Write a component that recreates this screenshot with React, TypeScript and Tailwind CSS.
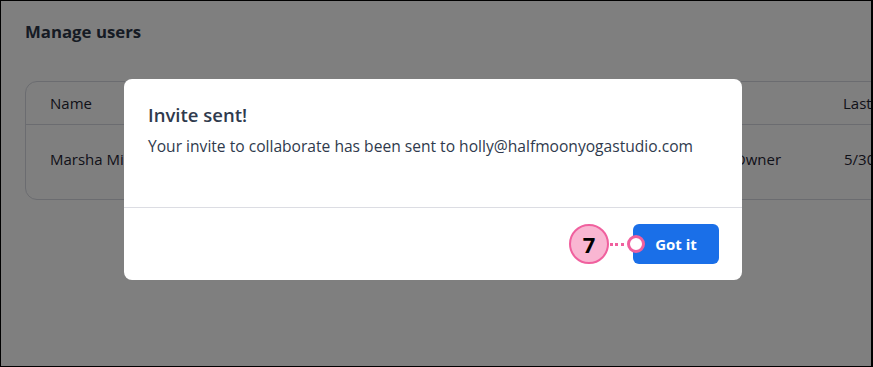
import React from "react";

export default function App() {
  return (
    <div
      className="relative w-[873px] h-[367px] overflow-hidden bg-white border-l border-t border-b border-r-2 border-black"
      style={{ fontFamily: "'Open Sans', 'Noto Sans', sans-serif" }}
    >
      {/* underlying page */}
      <div className="pl-6 pt-[19px]">
        <h1 className="text-[16.8px] font-bold text-[#2d3748] leading-6">Manage users</h1>
        <div className="mt-[37px] w-[900px] h-[119px] rounded-xl border border-[#d6d8e0] text-[#1f2433] text-[15px]">
          <div className="h-[43px] flex items-center border-b border-[#d6d8e0]">
            <div className="pl-6 w-[745px]">Name</div>
            <div className="pl-[72px]">Last</div>
          </div>
          <div className="h-[75px] flex items-center pb-[6px]">
            <div className="pl-6 w-[708px]">Marsha Miller</div>
            <div className="w-[110px]">Owner</div>
            <div>5/30</div>
          </div>
        </div>
      </div>

      {/* overlay */}
      <div className="absolute inset-0 bg-black/50" />

      {/* modal */}
      <div className="absolute left-[123px] top-[78px] w-[618px] h-[201px] bg-white rounded-lg flex flex-col">
        <div className="px-6 pt-[24px] h-[129px] border-b border-[#dcdde3]">
          <div className="text-[18.5px] font-semibold text-[#2f3a4d] leading-6">Invite sent!</div>
          <div className="mt-[9px] text-[15.6px] text-[#2f3a4d] leading-5">
            Your invite to collaborate has been sent to holly@halfmoonyogastudio.com
          </div>
        </div>
        <div className="flex-1 flex items-center justify-end pr-[23px]">
          <div className="relative flex items-center">
            <div className="w-[40px] h-[40px] rounded-full bg-[#f9b6d2] border-2 border-[#f0609e] flex items-center justify-center text-[22px] font-bold text-black">
              7
            </div>
            <div className="w-[14px] border-t-[3px] border-dotted border-[#f0609e] mx-[1px]" />
            <button className="h-[40px] w-[86px] rounded-md bg-[#1a6fe8] text-white text-[15px] font-bold ml-[8px]">
              Got it
            </button>
            <div className="absolute left-[58px] top-1/2 -translate-y-1/2 w-[18px] h-[18px] rounded-full bg-white border-[3px] border-[#f0609e]" />
          </div>
        </div>
      </div>
    </div>
  );
}
